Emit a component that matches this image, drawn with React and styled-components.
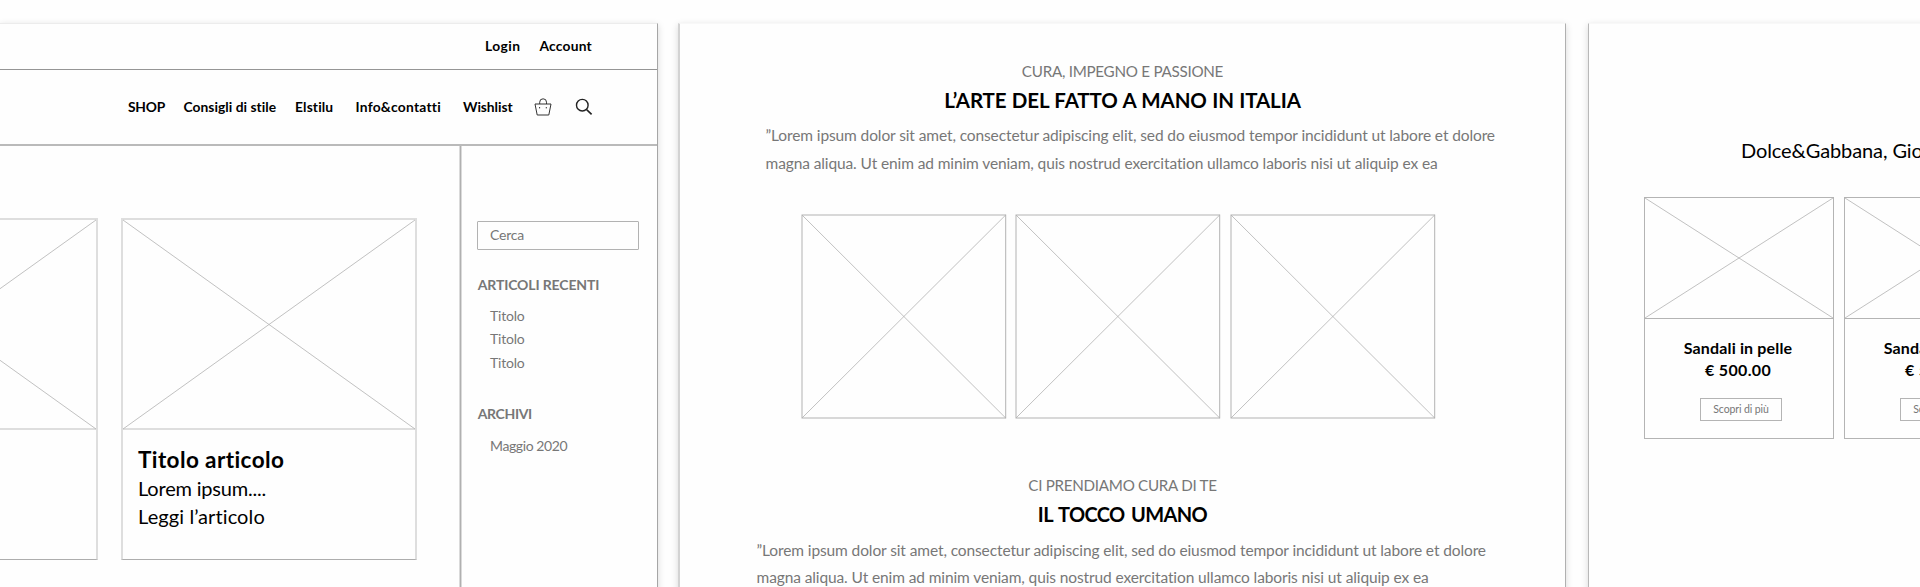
import React from "react";
import styled, { createGlobalStyle } from "styled-components";

const Global = createGlobalStyle`
  * { box-sizing: border-box; }
  body { margin: 0; background: #fefefe; overflow: hidden; }
`;

const Board = styled.main`
  display: flex;
  height: 587px;
  padding-top: 23px;
  overflow: hidden;
  font-family: Lato, "Liberation Sans", sans-serif;
  color: #000;
`;

const Sheet = styled.section`
  flex: none;
  width: ${(p) => p.$width}px;
  height: 620px;
  margin-right: ${(p) => p.$gap || 0}px;
  background: #fefefe;
  border-top: 1px solid ${(p) => p.$top || "#f8f8f8"};
  border-left: ${(p) => p.$left || "0"};
  border-right: ${(p) => p.$right || "0"};
  box-shadow: 0 2px 7px rgba(0, 0, 0, 0.15);
`;

const Text = styled.div`
  margin: 0;
  font-size: ${(p) => p.$size}px;
  line-height: ${(p) => p.$line || 24}px;
  font-weight: ${(p) => (p.$bold ? 700 : 400)};
  letter-spacing: ${(p) => p.$track || 0}px;
  word-spacing: ${(p) => p.$words || 0}px;
  color: ${(p) => (p.$muted ? "#777" : "#000")};
  white-space: nowrap;
  font-variant-ligatures: none;
`;

const AccountBar = styled.div`
  display: grid;
  grid-template-columns: 54.5px auto;
  justify-content: start;
  align-items: center;
  height: 46px;
  padding: 0 0 2px 485px;
  border-bottom: 1px solid #959595;
`;

const NavBar = styled.nav`
  display: grid;
  grid-template-columns: 55.5px 111.5px 60.5px 107.5px 71px 41px auto;
  justify-content: start;
  align-items: center;
  height: 76px;
  padding: 0 0 1px 128px;
  border-bottom: 2px solid #bababa;
`;

const BlogBody = styled.div`
  display: flex;
  justify-content: flex-end;
  height: 497px;
`;

const Articles = styled.div`
  flex: none;
  display: flex;
  gap: 23px;
  padding: 72px 43px 0 0;
`;

const ArticleCard = styled.article`
  flex: none;
  width: 296px;
  height: 342px;
  border: 2px solid #dedede;
  border-bottom: 1px solid #adadad;
`;

const ArticleImage = styled.div`
  height: 210px;
  border-bottom: 2px solid #dedede;
`;

const ArticleText = styled.div`
  padding: 15px 0 0 15px;
`;

const Sidebar = styled.aside`
  flex: none;
  width: 197px;
  padding: 75px 0 0 16px;
  border-left: 1px solid #b0b0b0;
  box-shadow: -1px 0 #dadada, inset 1px 0 #dadada;
`;

const SearchBox = styled.div`
  width: 162px;
  height: 29px;
  padding-left: 12px;
  border: 1px solid #b2b2b2;
  border-radius: 1px;
`;

const SideTitle = styled.div`
  padding: ${(p) => p.$top}px 0 0 0.7px;
`;

const SideList = styled.div`
  padding: 6.5px 0 0 13px;
`;

const Drawing = styled.svg`
  display: block;
  overflow: visible;
  fill: none;
  stroke: #b2b2b2;
`;

const Centered = styled.header`
  display: flex;
  flex-direction: column;
  align-items: center;
  padding-top: ${(p) => p.$top}px;
`;

const Paragraph = styled.div`
  padding: 5.5px 0 0 ${(p) => p.$left}px;
`;

const Gallery = styled.div`
  display: flex;
  gap: 10.6px;
  padding: 37.1px 0 0 122px;
`;

const Brands = styled.div`
  padding: 113.5px 0 0 152px;
`;

const Products = styled.div`
  display: flex;
  gap: 10px;
  padding: 35.5px 0 0 55px;
`;

const Product = styled.article`
  flex: none;
  width: 190px;
  height: 242px;
  border: 1px solid #b4b4b4;
`;

const ProductImage = styled.div`
  height: 121px;
  border-bottom: 1px solid #b4b4b4;
`;

const ProductInfo = styled.div`
  display: flex;
  flex-direction: column;
  align-items: center;
  padding: 17.5px 2px 0 0;
`;

const MoreButton = styled.button`
  display: flex;
  align-items: center;
  justify-content: center;
  width: 82px;
  height: 23px;
  margin: 16.5px 0 0 6px;
  padding: 0 0 1px 0;
  background: none;
  border: 1px solid #b4b4b4;
  font-family: inherit;
`;

function Placeholder({ w, h, frame }) {
  return (
    <Drawing width={w} height={h}>
      {frame && <rect width={w} height={h} />}
      <path d={`M0 0L${w} ${h}M${w} 0L0 ${h}`} strokeOpacity="0.8" />
    </Drawing>
  );
}

const BagIcon = () => (
  <svg width="18" height="18" viewBox="0 0 18 18" fill="none" stroke="#333" strokeWidth="1">
    <path d="M1 6H17L14.8 17H3.2Z" strokeLinejoin="round" />
    <path d="M5.7 6V4.2a3.4 3.4 0 0 1 6.8 0V6" />
    <path d="M5.6 9v1.4M12.3 9v1.4" />
  </svg>
);

const SearchIcon = () => (
  <svg width="18" height="18" viewBox="0 0 18 18" fill="none" stroke="#222" strokeWidth="1.4">
    <circle cx="7.3" cy="7.2" r="5.8" />
    <path d="M11.5 11.5L16.6 16.4" strokeWidth="1.7" />
  </svg>
);

const NavText = (props) => <Text as="a" $size={13.8} $bold {...props} />;

function Article({ title, lines }) {
  return (
    <ArticleCard>
      <ArticleImage>
        <Placeholder w={292} h={209} />
      </ArticleImage>
      {title && (
        <ArticleText>
          <Text as="h3" $size={22.5} $line={29} $bold $track={0.4}>{title}</Text>
          {lines.map((l) => (
            <Text key={l.text} $size={20} $line={28.3} $track={l.track}>{l.text}</Text>
          ))}
        </ArticleText>
      )}
    </ArticleCard>
  );
}

function ProductCard() {
  return (
    <Product>
      <ProductImage>
        <Placeholder w={188} h={120} />
      </ProductImage>
      <ProductInfo>
        <Text $size={16} $line={22.5} $bold $track={0.15}>Sandali in pelle</Text>
        <Text $size={16} $line={22} $bold $track={0.35}>€ 500.00</Text>
        <MoreButton>
          <Text as="span" $size={10.5} $line={16} $track={-0.1} $muted>Scopri di più</Text>
        </MoreButton>
      </ProductInfo>
    </Product>
  );
}

function Story({ top, left, kicker, kickerTrack, title, titleSize, titleTrack, titleWords }) {
  return (
    <>
      <Centered $top={top}>
        <Text $size={15.2} $track={kickerTrack} $muted>{kicker}</Text>
        <Text as="h2" $size={titleSize} $line={34} $track={titleTrack} $words={titleWords} $bold>{title}</Text>
      </Centered>
      <Paragraph $left={left}>
        <Text $size={15.5} $line={27.7} $track={-0.11} $muted>
          ”Lorem ipsum dolor sit amet, consectetur adipiscing elit, sed do eiusmod tempor incididunt ut labore et dolore
        </Text>
        <Text $size={15.5} $line={27.7} $track={-0.11} $muted>
          magna aliqua. Ut enim ad minim veniam, quis nostrud exercitation ullamco laboris nisi ut aliquip ex ea
        </Text>
      </Paragraph>
    </>
  );
}

const articleLines = [
  { text: "Lorem ipsum....", track: -0.2 },
  { text: "Leggi l’articolo", track: 0.1 },
];

export default function App() {
  return (
    <>
      <Global />
      <Board>
        <Sheet $width={658} $gap={20} $top="#ececec" $right="1px solid #a6a6a6">
          <AccountBar>
            <NavText $track={0.45}>Login</NavText>
            <NavText $track={0.2}>Account</NavText>
          </AccountBar>
          <NavBar>
            <NavText $track={-0.2}>SHOP</NavText>
            <NavText $track={0.04}>Consigli di stile</NavText>
            <NavText $track={0.15}>Elstilu</NavText>
            <NavText $track={0.25}>Info&amp;contatti</NavText>
            <NavText $track={-0.05}>Wishlist</NavText>
            <BagIcon />
            <SearchIcon />
          </NavBar>
          <BlogBody>
            <Articles>
              <Article />
              <Article title="Titolo articolo" lines={articleLines} />
            </Articles>
            <Sidebar>
              <SearchBox>
                <Text $size={14} $line={26} $track={-0.2} $muted>Cerca</Text>
              </SearchBox>
              <SideTitle $top={23}>
                <Text $size={14} $track={-0.13} $bold $muted>ARTICOLI RECENTI</Text>
              </SideTitle>
              <SideList>
                {[1, 2, 3].map((n) => (
                  <Text key={n} $size={14} $line={23.7} $track={-0.2} $muted>Titolo</Text>
                ))}
              </SideList>
              <SideTitle $top={27.5}>
                <Text $size={14} $track={-0.35} $bold $muted>ARCHIVI</Text>
              </SideTitle>
              <SideList>
                <Text $size={14} $line={25} $track={-0.4} $muted>Maggio 2020</Text>
              </SideList>
            </Sidebar>
          </BlogBody>
        </Sheet>

        <Sheet $width={888} $gap={22} $left="2px solid #d3d3d3" $right="1px solid #b0b0b0">
          <Story
            top={34.5} left={85.5}
            kicker="CURA, IMPEGNO E PASSIONE" kickerTrack={-0.27}
            title="L’ARTE DEL FATTO A MANO IN ITALIA" titleSize={20.5} titleTrack={-0.1} titleWords={0.5}
          />
          <Gallery>
            {[1, 2, 3].map((n) => (
              <Placeholder key={n} w={203.7} h={203} frame />
            ))}
          </Gallery>
          <Story
            top={55.7} left={76.5}
            kicker="CI PRENDIAMO CURA DI TE" kickerTrack={-0.29}
            title="IL TOCCO UMANO" titleSize={20} titleTrack={-0.6} titleWords={2}
          />
        </Sheet>

        <Sheet $width={500} $left="1px solid #b8b8b8">
          <Brands>
            <Text $size={20} $track={-0.1}>Dolce&amp;Gabbana, Gio</Text>
          </Brands>
          <Products>
            <ProductCard />
            <ProductCard />
          </Products>
        </Sheet>
      </Board>
    </>
  );
}
